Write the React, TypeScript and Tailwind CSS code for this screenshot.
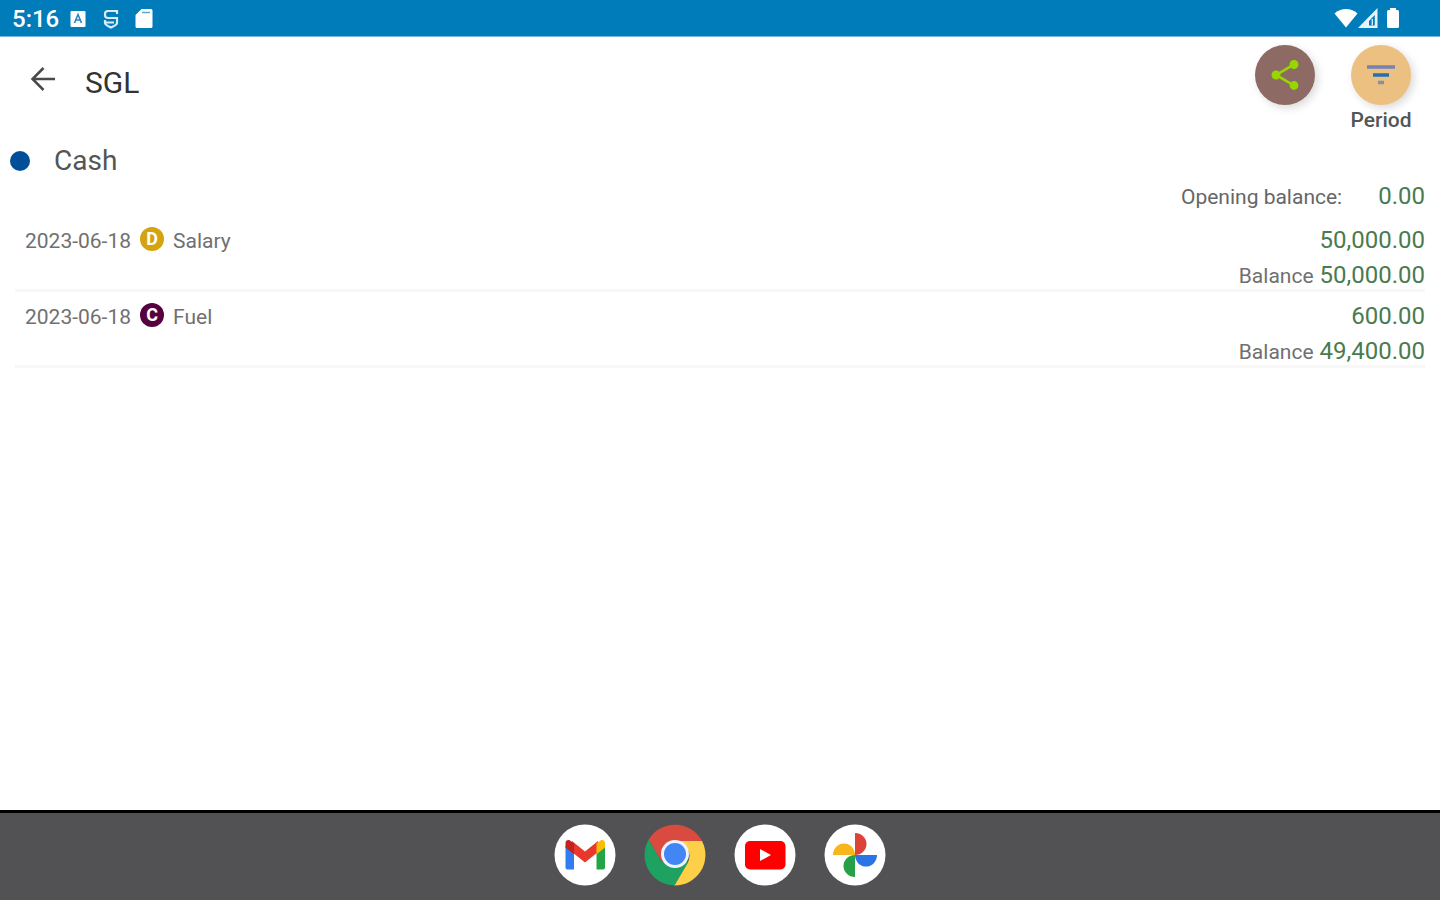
import { MdShare } from 'react-icons/md';

type Entry = {
  date: string;
  kind: 'D' | 'C';
  account: string;
  amount: string;
  balance: string;
};

const entries: Entry[] = [
  { date: '2023-06-18', kind: 'D', account: 'Salary', amount: '50,000.00', balance: '50,000.00' },
  { date: '2023-06-18', kind: 'C', account: 'Fuel', amount: '600.00', balance: '49,400.00' },
];

function StatusBar() {
  return (
    <div className="flex h-[37px] items-center border-b border-[#7fb6dc] bg-[#007cba] pl-3 pr-10 text-white">
      <span className="pt-[2px] text-[24px] font-medium leading-[34px]">5:16</span>
      <svg className="ml-[11px] h-9 w-4" viewBox="0 0 16 36" fill="none">
        <rect x="0.5" y="11" width="15" height="16" rx="1" fill="#fff" />
        <path d="M4.500 23 8 14.500l3.500 8.500M5.800 20h4.400" stroke="#2a86c0" strokeWidth="1.600" />
      </svg>
      <svg className="ml-[17px] h-9 w-4" viewBox="0 0 16 36" fill="none" stroke="#d8edf8" strokeWidth="2.200">
        <path d="M14 14v-3H5a3 3 0 0 0-3 3v1a3 3 0 0 0 3 3h9v5c0 2-3 3-6 4.500-3-1.500-6-2.500-6-4.500v-3M2 22.500h9" />
      </svg>
      <svg className="ml-4 h-9 w-[18px]" viewBox="0 0 18 36">
        <path d="M6.500 9H16a1.500 1.500 0 0 1 1.500 1.500v16A1.500 1.500 0 0 1 16 28H2a1.500 1.500 0 0 1-1.500-1.500V15z" fill="#fff" />
        <path d="M7 12.500h8" stroke="#5aa9d4" strokeWidth="1.500" />
      </svg>
      <div className="ml-auto flex items-center">
        <svg className="h-9 w-6" viewBox="0 0 24 36">
          <path d="M12 27.500.500 13.500C3.500 10.500 7.500 9 12 9s8.500 1.500 11.500 4.500z" fill="#fff" />
        </svg>
        <svg className="h-9 w-5" viewBox="0 0 20 36">
          <path d="M19.500 8v20H0z" fill="#e4f2fa" />
          <path d="M16.800 15v10.500H11V21z" fill="#007cba" />
          <path d="M14.300 19v6" stroke="#e4f2fa" strokeWidth="1.300" />
        </svg>
        <svg className="ml-2 h-9 w-[14px]" viewBox="0 0 14 36">
          <path d="M4 8h6v2h1.500A1.500 1.500 0 0 1 13 11.500v15a1.500 1.500 0 0 1-1.500 1.500h-9A1.500 1.500 0 0 1 1 26.500v-15A1.500 1.500 0 0 1 2.500 10H4z" fill="#fff" />
        </svg>
      </div>
    </div>
  );
}

function Header() {
  return (
    <header className="flex h-[106px] items-start pl-[25px] pr-[29px]">
      <button type="button" aria-label="Back" className="mt-6 text-[#4a4a4a]">
        <svg className="size-9" viewBox="0 0 36 36" fill="none" stroke="currentColor" strokeWidth="2.500">
          <path d="M30 18H8M18.500 7 7.500 18l11 11" />
        </svg>
      </button>
      <h1 className="ml-6 mt-6 text-[30px] leading-[44px] text-[#333]">SGL</h1>
      <div className="ml-auto flex gap-9 pt-2">
        <button
          type="button"
          aria-label="Share"
          className="flex size-[60px] items-center justify-center rounded-full bg-[#8d6a63] text-[#97d700] shadow-[3px_3px_8px_rgba(0,0,0,0.15)]">
          <MdShare className="size-9" />
        </button>
        <button type="button" className="flex w-[60px] flex-col items-center">
          <span className="flex size-[60px] items-center justify-center rounded-full bg-[#ecc080] shadow-[3px_3px_8px_rgba(0,0,0,0.15)]">
            <svg className="size-9" viewBox="0 0 36 36" fill="none" strokeWidth="3.500">
              <path d="M4 10h28" stroke="#7583b4" />
              <path d="M10 18h16" stroke="#2272b0" />
              <path d="M15 25.500h6" stroke="#8b8cac" />
            </svg>
          </span>
          <span className="text-[21px] font-medium leading-[30px] text-[#555]">Period</span>
        </button>
      </div>
    </header>
  );
}

function KindBadge({ kind }: { kind: Entry['kind'] }) {
  return (
    <span
      className={
        kind === 'D'
          ? 'flex size-6 items-center justify-center rounded-full bg-[#d3a310] text-[18px] font-bold leading-6 text-white'
          : 'flex size-6 items-center justify-center rounded-full bg-[#560040] text-[18px] font-bold leading-6 text-white'
      }>
      {kind}
    </span>
  );
}

function Ledger() {
  return (
    <main className="flex-1">
      <div className="flex h-9 items-center pl-[10px]">
        <span className="size-5 rounded-full bg-[#004f98]" />
        <h2 className="ml-6 text-[28px] leading-9 text-[#555]">Cash</h2>
      </div>
      <div className="flex items-baseline justify-end gap-9 pr-[15px] leading-[34px]">
        <span className="text-[21px] text-[#666]">Opening balance:</span>
        <span className="text-[24px] text-[#4a7a50]">0.00</span>
      </div>
      <div className="px-[15px] pt-[2px]">
        <table className="w-full">
          <tbody>
            {entries.map(entry => (
              <tr key={entry.account} className="border-b-3 border-[#f7f7f7]">
                <td className="pl-[10px] pt-[11px] align-top">
                  <div className="flex items-start text-[21px] leading-7 text-[#707070]">
                    <span>{entry.date}</span>
                    <span className="mx-[9px]">
                      <KindBadge kind={entry.kind} />
                    </span>
                    <span>{entry.account}</span>
                  </div>
                </td>
                <td className="pt-[11px] text-right text-[24px] leading-[26px] text-[#4a7a50]">
                  <div>{entry.amount}</div>
                  <div className="mt-[9px] flex items-baseline justify-end gap-[6px]">
                    <span className="text-[21px] text-[#707070]">Balance</span>
                    <span>{entry.balance}</span>
                  </div>
                </td>
              </tr>
            ))}
          </tbody>
        </table>
      </div>
    </main>
  );
}

function GmailIcon() {
  return (
    <svg viewBox="0 0 62 62" className="size-[62px]">
      <circle cx="31" cy="31" r="30.500" fill="#fff" />
      <path d="M11.500 22v21.500a2 2 0 0 0 2 2H20V26z" fill="#2f7df0" />
      <path d="M42.500 26v19.500H49a2 2 0 0 0 2-2V22z" fill="#22a447" />
      <path d="m18 17 13 10.500L44 17v11L31 38.500 18 28z" fill="#e8382c" />
      <path d="M11.500 23.500V19c0-2.500 2.500-3.500 4.500-2.500l4 3v10.700z" fill="#c5221f" />
      <path d="M51 23.500V19c0-2.500-2.500-3.500-4.500-2.500l-4 3v10.700z" fill="#fbbc04" />
    </svg>
  );
}

function ChromeIcon() {
  return (
    <svg viewBox="0 0 62 62" className="size-[62px]">
      <path d="M4.600 15.800A30.500 30.500 0 0 1 58 17H31v14L18 38.500z" fill="#d94b3f" />
      <path d="M4.600 15.800A30.500 30.500 0 0 0 30.500 61.500L44 38.500 31 31l-13 7.500z" fill="#1da261" />
      <path d="M58 17H31a15 15 0 0 1 13 21.500L30.500 61.500A30.500 30.500 0 0 0 58 17z" fill="#fdd048" />
      <circle cx="31" cy="30" r="14" fill="#eef3fd" />
      <circle cx="31" cy="30" r="11" fill="#4285f4" />
    </svg>
  );
}

function YoutubeIcon() {
  return (
    <svg viewBox="0 0 62 62" className="size-[62px]">
      <circle cx="31" cy="31" r="30.500" fill="#fff" />
      <rect x="11" y="17" width="40.500" height="28.500" rx="5" fill="#fe0000" />
      <path d="M26 25v12l11-6z" fill="#fff" />
    </svg>
  );
}

function PhotosIcon() {
  return (
    <svg viewBox="0 0 62 62" className="size-[62px]">
      <circle cx="31" cy="31" r="30.500" fill="#fff" />
      <path d="M31 9a11.500 11 0 0 1 0 22z" fill="#dc4437" />
      <path d="M9 31a11 11.500 0 0 1 22 0z" fill="#f6b61c" />
      <path d="M31 31h22a11 11.500 0 0 1-22 0z" fill="#2b74e8" />
      <path d="M31 31v22a11.500 11 0 0 1 0-22z" fill="#26a148" />
    </svg>
  );
}

const dockApps = [
  { name: 'Gmail', Icon: GmailIcon },
  { name: 'Chrome', Icon: ChromeIcon },
  { name: 'YouTube', Icon: YoutubeIcon },
  { name: 'Photos', Icon: PhotosIcon },
];

export default function App() {
  return (
    <div className="flex min-h-screen flex-col bg-white font-[Roboto,sans-serif]">
      <StatusBar />
      <Header />
      <Ledger />
      <nav className="flex h-[90px] items-start justify-center gap-7 border-t-3 border-black bg-[#525254] pt-[11px]">
        {dockApps.map(({ name, Icon }) => (
          <button key={name} type="button" aria-label={name}>
            <Icon />
          </button>
        ))}
      </nav>
    </div>
  );
}
